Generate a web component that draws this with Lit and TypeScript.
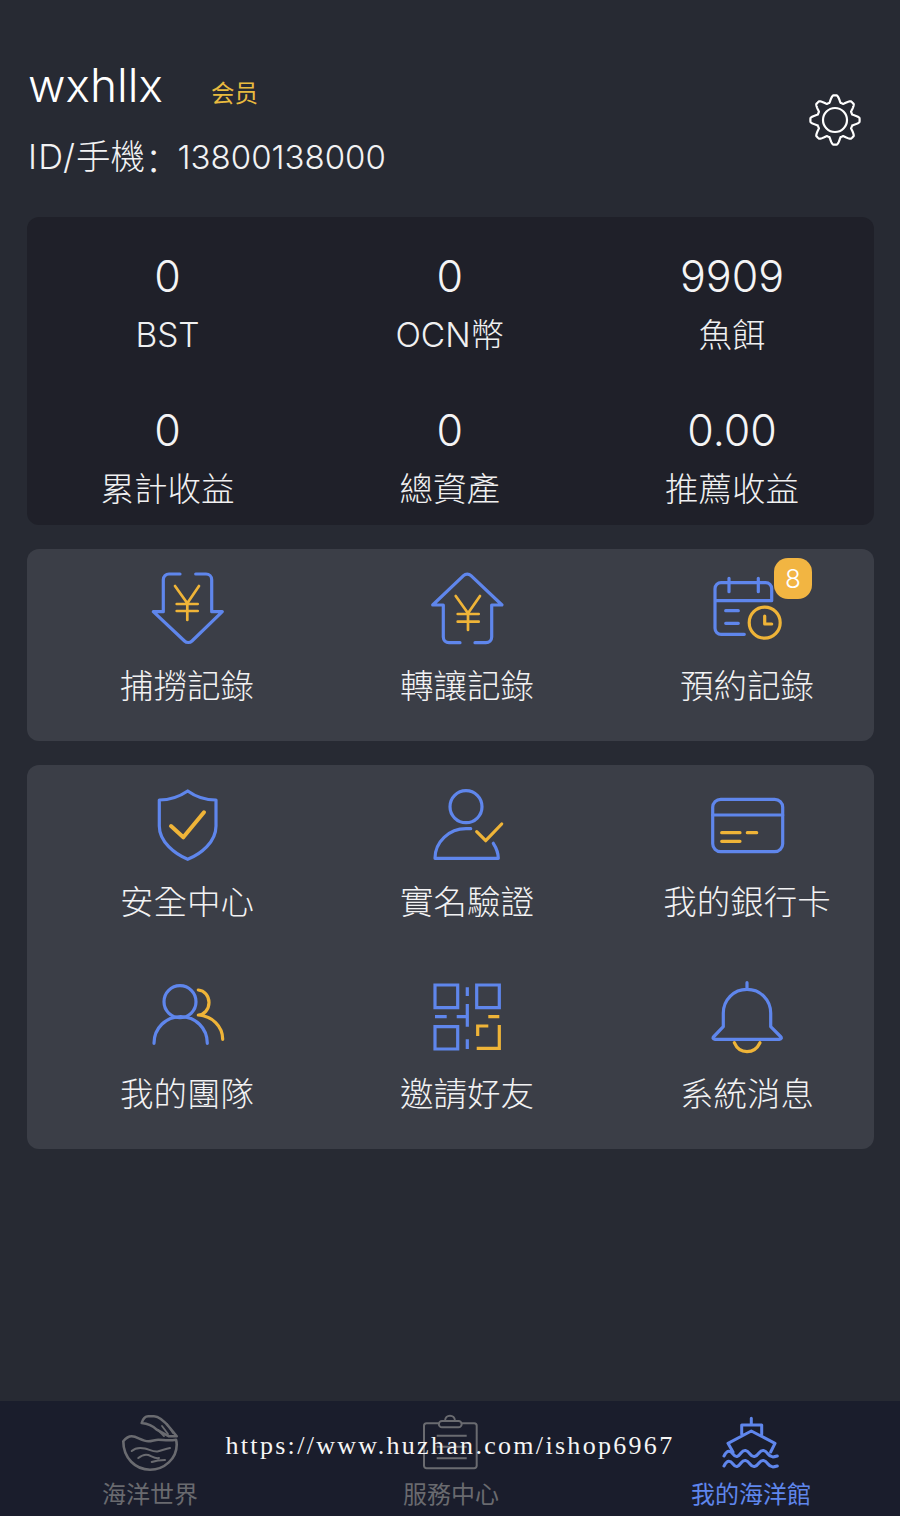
import { LitElement, html, css, svg } from "lit";
import { customElement } from "lit/decorators.js";

const B = "b";
const O = "o";
const icons: Record<string, unknown> = {
  down: svg`<path class=${B} d="M29 2H18a5.7 5.7 0 0 0-5.7 5.7V39.7H2.3L33.5 69a5.5 5.5 0 0 0 7.5 0L71.3 39.7H60.7V7.7A5.7 5.7 0 0 0 55 2H44.7"/><path class="o thin" d="M24 14 36.3 31.3 48 14M36.3 31.3V48M25.7 32H46.7M25.7 39H46.7"/>`,
  up: svg`<path class=${B} d="M29 70.7H18A5.7 5.7 0 0 1 12.3 65V33H1.7L32.5 3.7a5.5 5.5 0 0 1 7.5 0L71 33H60.7V65A5.7 5.7 0 0 1 55 70.7H44"/><path class="o thin" d="M24.7 24 37 41.3 49 24M37 41.3V58M26.7 42H47.7M26.7 49.7H47.7"/>`,
  cal: svg`<path class=${B} d="M33.3 62.3H10a6 6 0 0 1-6-6V16.7a6 6 0 0 1 6-6H54.7a6 6 0 0 1 6 6V28.7H4M18 6.3V19.7M47.3 6.3V19.7M14.7 38.7H27.3M14.7 51.3H27.3"/><circle class=${O} cx="53.7" cy="50.7" r="15.5"/><path class=${O} d="M53.7 44V52H60.7"/>`,
  shield: svg`<path class=${B} d="M36.7 1C28 7 18 10 8.3 10V36C8.3 52 24 64 36.7 69.3 50 64 65 52 65 36V10C55 10 45 7 36.7 1Z"/><path class="o thick" d="M20 36 32.3 47.3 53 22.3"/>`,
  person: svg`<circle class=${B} cx="35" cy="16.7" r="16"/><path class=${B} d="M39.7 38.7H35C18 38.7 4 52 4 68.3H67.3C67.3 63 65 57.5 62.3 53.3"/><path class=${O} d="M45.7 41.7 54.7 50.7 70.7 34"/>`,
  card: svg`<rect class=${B} x="1.7" y="9.3" width="70" height="52.4" rx="8"/><path class=${B} d="M1.7 25H71.7"/><path class=${O} d="M10.7 42.7H29M36.3 42.7H45.7M10.7 51.3H29"/>`,
  team: svg`<circle class=${B} cx="29" cy="19.7" r="16"/><path class=${B} d="M3 61.3C3 46 15 34.7 29.7 34.7S56.3 46 56.3 61.3"/><path class=${O} d="M47.3 8C53.5 8.5 58 14 58 20.5 58 27.5 53 33 47.3 33 61 34 71.7 44 71.7 57.3"/>`,
  qr: svg`<path class="b square" d="M4 3H26.7V25.7H4ZM45.7 3H68.3V25.7H45.7ZM4 44.7H26.7V67H4ZM36.3 5.3V14M36.3 22V44.7M4 34.7H15.7M25.7 34.7H36.3M36.3 57.3V67"/><path class="o square" d="M57.3 34.7H68.3M57.3 44H46.7V54M68.3 43V66.3H45.7"/>`,
  bell: svg`<path class=${B} d="M36 .7V7.3M12.3 44.7V31C12.3 18 22.5 7.3 36 7.3S59.7 18 59.7 31V44.7L69.5 54.5C71 56 70.3 57.3 68.5 57.3H3.9C2.1 57.3 1.4 56 2.9 54.500Z"/><path class=${O} d="M23.3 60.7C26 67 31 69.7 36 69.7S46 67 49 60.7"/>`,
  world: svg`<g fill="none" stroke="currentColor" stroke-width="2.600" stroke-linecap="round" stroke-linejoin="round">
    <path d="M3.300 28.300C6 25 9 23.300 11.700 23.300 17 23.300 22 28.300 28.300 28.300 32 28.300 35 26.700 38.300 26.700 43 26.700 48 28 56 26.700 56.700 29 56.700 30 56.700 31.700 56.700 45.500 44.500 56.700 30 56.700S3.300 45 3.300 28.300Z"/>
    <path stroke-width="2" d="M11.700 38C16 34 20.500 34.500 25 35.500S34 39.500 38.300 38.300 46 35.500 50 35M18.300 45C22 42 25 41 28.300 42S35 46 39 45M31.700 49C36 47.500 40 47 45 47"/>
    <path d="M21.700 10C23 5.500 25.500 3.300 28.300 3.300H34C39 3.300 45 9 50 15L56.700 23.300H49L36.700 16.700C33 13 27 10.500 21.700 10Z"/>
    <path stroke-width="1.800" d="M42 13 48 21M47 11 53 20M38 17 44 23"/>
  </g>`,
  clip: svg`<path fill="none" stroke="currentColor" stroke-width="2" d="M19.300 10.300H6.500A2.500 2.500 0 0 0 4 12.800V52.800A2.500 2.500 0 0 0 6.500 55.300H54.200A2.500 2.500 0 0 0 56.700 52.800V12.800A2.500 2.500 0 0 0 54.200 10.300H40.700M22 8H38.500A2.700 2.700 0 0 1 38.500 14.300H22A2.700 2.700 0 0 1 22 8ZM25 8C25 1 35 1 35 8M16.700 22.700H46.700M16.700 33.700H46.700M16.700 45.300H46.700"/>`,
  ship: svg`<path fill="none" stroke="currentColor" stroke-width="3" stroke-linejoin="round" stroke-linecap="round" d="M31.300 5.300V12M21.700 21.300V12H41.700V21.300M13 39 8 30.300 31.300 18 55 30.300 50.700 39M4 43C7 37 10 37 13 41S18 44 21 40 27 37 30 41 36 44 39 40 45 37 48 41 54 44 57.300 43M4 53C7 47 10 47 13 51S18 54 21 50 27 47 30 51 36 54 39 50 45 47 48 51 54 54 57.300 53"/>`,
};

function gearPath(): string {
  const pts: string[] = [];
  for (let i = 0; i < 360; i++) {
    const t = (i * Math.PI) / 180;
    const wave = Math.max(-1, Math.min(1, 1.25 * Math.cos(8 * t)));
    const r = 21.3 + 3.3 * wave;
    pts.push(`${(26 + r * Math.sin(t)).toFixed(2)} ${(26 - r * Math.cos(t)).toFixed(2)}`);
  }
  return `M${pts.join("L")}Z`;
}

const stats = [
  ["0", "BST"], ["0", "OCN幣"], ["9909", "魚餌"],
  ["0", "累計收益"], ["0", "總資產"], ["0.00", "推薦收益"],
];

@customElement("app-root")
export class AppRoot extends LitElement {
  static styles = css`
    :host {
      display: flex;
      flex-direction: column;
      position: relative;
      width: 900px;
      height: 1516px;
      overflow: hidden;
      background: #272a33;
      color: #fff;
      font-family: Inter, "Noto Sans CJK TC", sans-serif;
      font-weight: 300;
    }
    .head {
      display: flex;
      justify-content: space-between;
      padding: 56px 39px 0 28px;
      height: 217px;
      flex: none;
      box-sizing: border-box;
    }
    .name-row { display: flex; align-items: flex-end; height: 58px; }
    .name { font-size: 46px; line-height: 58px; }
    .tag { font-size: 23.500px; color: #e9bb3f; margin: 0 0 3px 48px; line-height: 34px; font-weight: 400; }
    .id { font-size: 34.500px; line-height: 40px; height: 40px; margin-top: 23px; color: #f2f2f3; white-space: nowrap; display: flex; align-items: center; }
    .id .pre { letter-spacing: 1.200px; }
    .id .colon { font-family: "Noto Sans CJK SC", sans-serif; }
    .id b { font-weight: 300; font-size: 33px; margin-left: -2px; }
    .gear { width: 52px; height: 52px; margin-top: 38px; flex: none; }
    .gear path, .gear circle { fill: none; stroke: #fff; stroke-width: 2.200; stroke-linejoin: round; }
    .stats {
      margin: 0 26px 0 27px;
      height: 308px;
      flex: none;
      border-radius: 12px;
      background: #1f2029;
      display: grid;
      grid-template-columns: repeat(3, 281px);
      column-gap: 1.250px;
      grid-auto-rows: 154px;
    }
    .stat { display: flex; flex-direction: column; align-items: center; padding-top: 31px; }
    .num { font-size: 43px; line-height: 56px; color: #f4f4f5; }
    .lbl { font-size: 33.500px; line-height: 48px; margin-top: 7px; color: #f0f0f1; }
    .panel {
      margin: 24px 26px 0 27px;
      flex: none;
      border-radius: 12px;
      background: #3b3e47;
      display: grid;
      grid-template-columns: repeat(3, 280px);
      grid-auto-rows: 192px;
      padding-left: 20px;
    }
    .item { display: flex; flex-direction: column; align-items: center; padding-top: 23px; position: relative; }
    .item svg { width: 72px; height: 72px; overflow: visible; }
    .low .item { padding-top: 25px; }
    .low .item span { margin-top: 16px; }
    .b, .o { fill: none; stroke-width: 3.200; stroke-linecap: round; stroke-linejoin: round; }
    .b { stroke: #5f86ec; }
    .o { stroke: #efb438; }
    .thick { stroke-width: 4; }
    .thin { stroke-width: 2.700; }
    .square { stroke-linecap: butt; stroke-linejoin: miter; }
    .item span { font-size: 33.500px; line-height: 48px; margin-top: 18px; color: #f2f2f3; }
    .badge {
      position: absolute;
      left: 167px;
      top: 9px;
      width: 38px;
      height: 41px;
      border-radius: 14px;
      background: #f2b542;
      color: #fff;
      font-size: 26px;
      display: flex;
      align-items: center;
      justify-content: center;
    }
    .nav {
      margin-top: auto;
      height: 115px;
      background: #1a1d2c;
      display: grid;
      grid-template-columns: repeat(3, 300px);
      position: relative;
    }
    .tab { display: flex; flex-direction: column; align-items: center; color: #696a6f; padding-top: 12px; }
    .tab svg { width: 60px; height: 60px; overflow: visible; color: #6a6b70; }
    .tab span { font-size: 24px; line-height: 34px; margin-top: 5px; font-weight: 400; }
    .tab:nth-child(2) span { margin-left: 2px; }
    .tab.on, .tab.on svg { color: #5f86ec; }
    .tab.on span { margin-left: 2px; }
    .mark {
      position: absolute;
      left: 0;
      right: 0;
      top: 27px;
      text-align: center;
      font-family: "Liberation Serif", serif;
      font-weight: 400;
      font-size: 26px;
      line-height: 36px;
      letter-spacing: 2.300px;
      color: #f5f5f5;
      white-space: nowrap;
    }
  `;

  private item(icon: string, label: string, badge?: string) {
    return html`<div class="item">
      <svg viewBox="0 0 72 72">${icons[icon]}</svg>
      <span>${label}</span>
      ${badge ? html`<div class="badge">${badge}</div>` : ""}
    </div>`;
  }

  private tab(icon: string, label: string, on = false) {
    return html`<div class="tab ${on ? "on" : ""}">
      <svg viewBox="0 0 60 60">${icons[icon]}</svg>
      <span>${label}</span>
    </div>`;
  }

  render() {
    return html`
      <div class="head">
        <div>
          <div class="name-row"><div class="name">wxhllx</div><div class="tag">会员</div></div>
          <div class="id"><span class="pre">ID/</span>手機<span class="colon">：</span><b>13800138000</b></div>
        </div>
        <svg class="gear" viewBox="0 0 52 52">
          <path d=${gearPath()}/>
          <circle cx="26" cy="26" r="12"/>
        </svg>
      </div>
      <div class="stats">
        ${stats.map(([n, l]) => html`<div class="stat"><div class="num">${n}</div><div class="lbl">${l}</div></div>`)}
      </div>
      <div class="panel">
        ${this.item("down", "捕撈記錄")}
        ${this.item("up", "轉讓記錄")}
        ${this.item("cal", "預約記錄", "8")}
      </div>
      <div class="panel low">
        ${this.item("shield", "安全中心")}
        ${this.item("person", "實名驗證")}
        ${this.item("card", "我的銀行卡")}
        ${this.item("team", "我的團隊")}
        ${this.item("qr", "邀請好友")}
        ${this.item("bell", "系統消息")}
      </div>
      <div class="nav">
        ${this.tab("world", "海洋世界")}
        ${this.tab("clip", "服務中心")}
        ${this.tab("ship", "我的海洋館", true)}
        <div class="mark">https://www.huzhan.com/ishop6967</div>
      </div>
    `;
  }
}
